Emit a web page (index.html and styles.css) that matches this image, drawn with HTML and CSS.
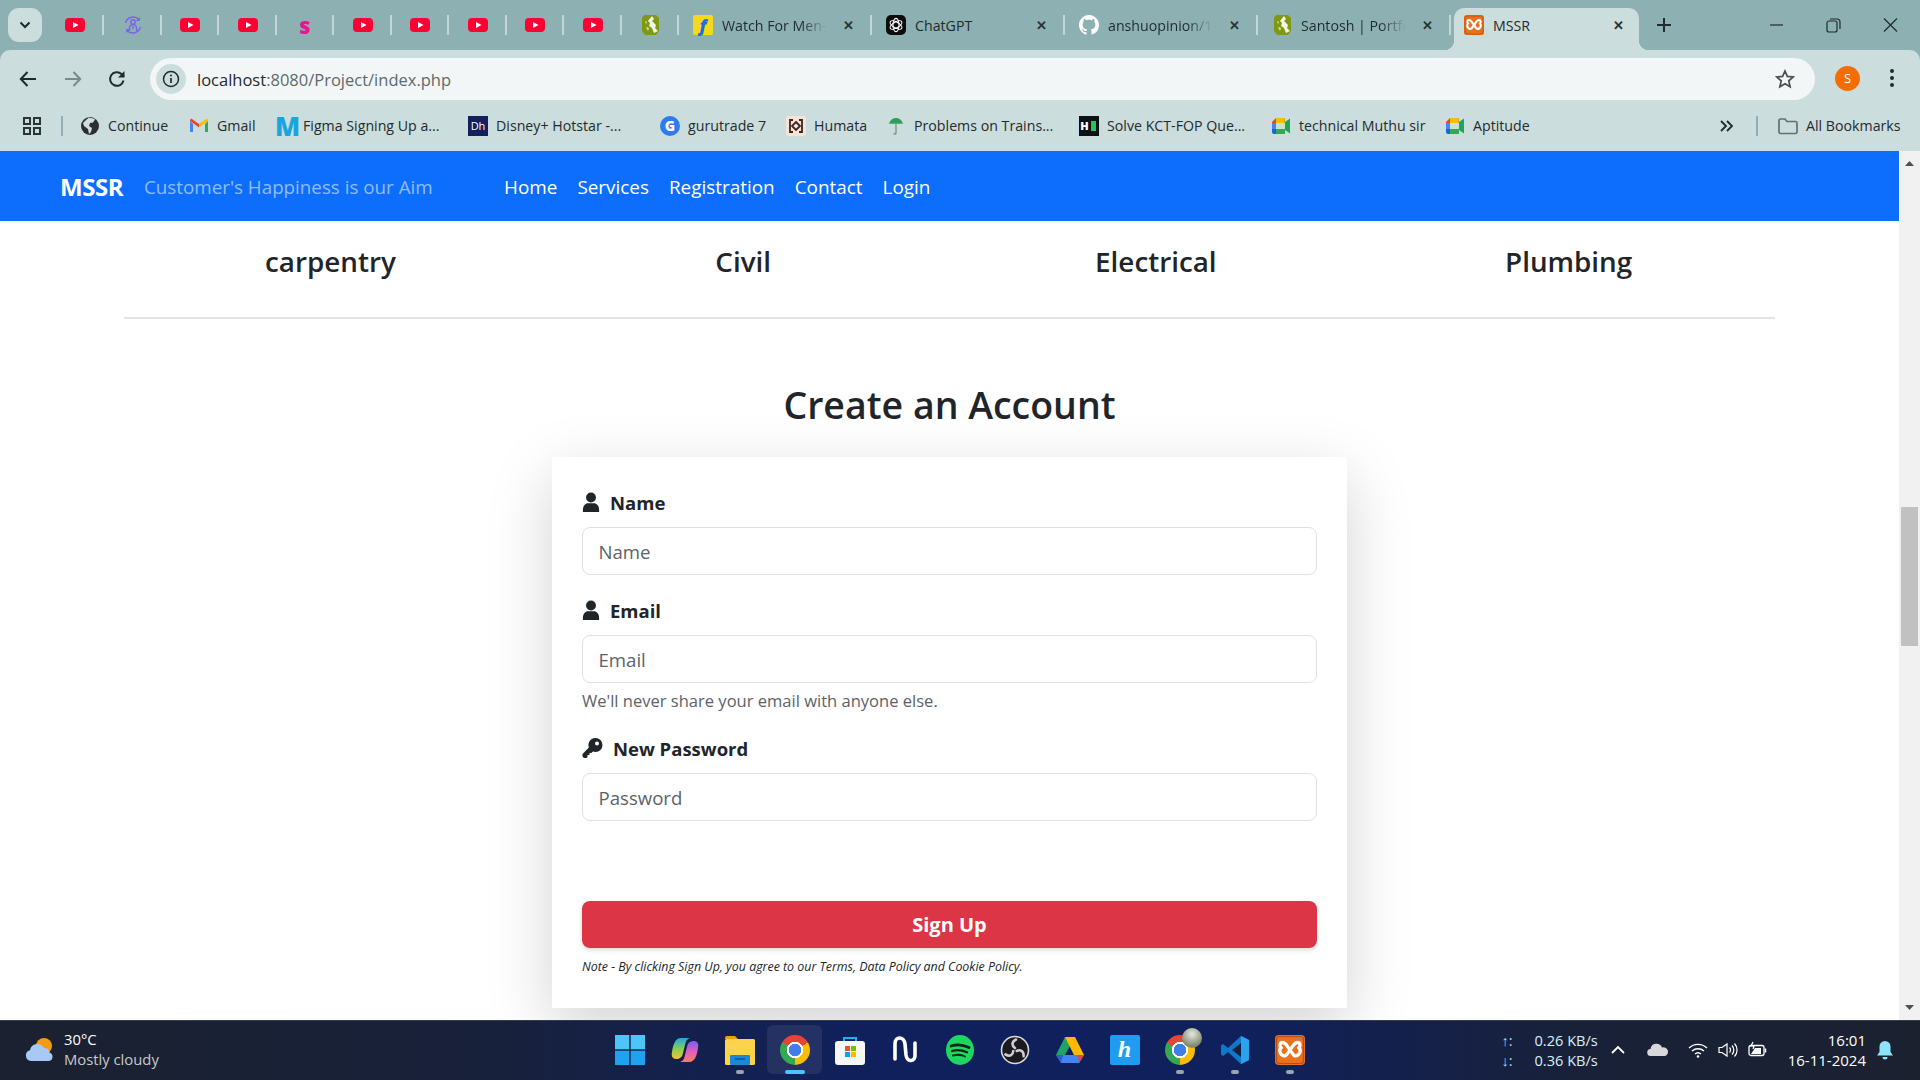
FILE: index.html
```html
<!DOCTYPE html>
<html lang="en">
<head>
    <meta charset="UTF-8">
    <title>MSSR</title>
    <link rel="stylesheet" href="styles.css">
</head>
<body>
    <svg class="sprites" width="0" height="0">
        <symbol id="yt" viewBox="0 0 20 20"><rect y="3" width="20" height="14" rx="4" fill="#ff0033"/><path d="M8 7l5.500 3L8 13z" fill="#fff"/></symbol>
        <symbol id="santosh" viewBox="0 0 20 20"><path d="M4 0h12l3 3v13l-3 4H5l-3-4V3z" fill="#7f9a12"/><path d="M12 1l2 3-2 2 4 4-1 3 3 3-4 2-2-5-3-2 1-3-2-2z" fill="#f3f6e6"/><path d="M5 6l2 1-1 2zM6 12l3 1-1 3z" fill="#dfe8b0"/></symbol>
        <symbol id="helper" viewBox="0 0 20 20"><g fill="none" stroke="#7a62e8" stroke-width="1.400"><path d="M2.500 8A8 8 0 0 1 16 4.500M17.500 12A8 8 0 0 1 4 15.500"/><circle cx="10" cy="7" r="2.200"/><path d="M6.500 16v-3a2.500 2.500 0 0 1 7 0v3M10 11v3"/></g><path d="M16.800 2v4h-4zM3.200 18v-4h4z" fill="#7a62e8"/></symbol>
        <symbol id="gpt" viewBox="0 0 20 20"><rect width="20" height="20" rx="5" fill="#0c0c0c"/><g fill="none" stroke="#fff" stroke-width="1.100"><ellipse cx="10" cy="10" rx="3" ry="6.600"/><ellipse cx="10" cy="10" rx="3" ry="6.600" transform="rotate(60 10 10)"/><ellipse cx="10" cy="10" rx="3" ry="6.600" transform="rotate(120 10 10)"/></g></symbol>
        <symbol id="github" viewBox="0 0 16 16"><path fill="#fff" d="M8 0C3.580 0 0 3.580 0 8c0 3.540 2.290 6.530 5.470 7.590.4.070.55-.17.55-.38 0-.19-.01-.82-.01-1.490-2.010.37-2.530-.49-2.690-.94-.09-.23-.48-.94-.82-1.130-.28-.15-.68-.52-.01-.53.63-.01 1.080.58 1.230.82.72 1.210 1.870.87 2.330.66.07-.52.28-.87.51-1.070-1.780-.2-3.640-.89-3.640-3.950 0-.87.31-1.590.82-2.150-.08-.2-.36-1.020.08-2.120 0 0 .67-.21 2.200.82.64-.18 1.320-.27 2-.27.68 0 1.360.09 2 .27 1.530-1.040 2.200-.82 2.200-.82.44 1.100.16 1.920.08 2.120.51.56.82 1.270.82 2.150 0 3.070-1.870 3.750-3.650 3.950.29.25.54.73.54 1.480 0 1.070-.01 1.930-.01 2.200 0 .21.15.46.55.38A8.013 8.013 0 0 0 16 8c0-4.420-3.580-8-8-8z"/></symbol>
        <symbol id="xampp" viewBox="0 0 20 20"><rect width="20" height="20" rx="2.500" fill="#e8701f"/><rect x="1" y="1" width="18" height="18" rx="2" fill="none" stroke="#b9500f" stroke-width=".8"/><g fill="none" stroke="#fff" stroke-width="2.200"><path d="M10 10c-2-3-3-5-5-5S3 7.500 4 8.500c-1 1-1.500 3.500 1 5s3-1 5-3.500z"/><path d="M10 10c2-3 3-5 5-5s2 2.500 1 3.500c1 1 1.500 3.500-1 5s-3-1-5-3.500z"/></g></symbol>
        <symbol id="gmail" viewBox="0 0 20 20"><path d="M1 5v11h3V8z" fill="#4285f4"/><path d="M19 5v11h-3V8z" fill="#34a853"/><path d="M1 5l9 6.500V8L3 3C2 2.500 1 3.500 1 5z" fill="#ea4335"/><path d="M19 5l-9 6.500V8l7-5c1-.5 2 .5 2 2z" fill="#fbbc04"/></symbol>
        <symbol id="humata" viewBox="0 0 20 20"><rect width="20" height="20" rx="2" fill="#f5e3d6"/><g fill="none" stroke="#3a2520" stroke-width="1.800"><path d="M7 4H4v12h3M13 4h3v12h-3"/><path d="M10 6l4 4-4 4-4-4z"/></g></symbol>
        <symbol id="umbrella" viewBox="0 0 20 20"><path d="M3 8c1-4 4-6 7-6s6 2 7 6c-1.500-.8-2.500-.8-3.500 0-1-.8-2.500-.8-3.500 0-1-.8-2.500-.8-3.500 0C5.500 7.200 4.500 7.200 3 8z" fill="#2f9e5a"/><path d="M10 8v9c0 1.500-2 1.500-2.200 0" fill="none" stroke="#6d8f70" stroke-width="1.200"/></symbol>
        <symbol id="meet" viewBox="0 0 20 20"><path d="M5 2h9v5H5z" fill="#fbbc04"/><path d="M1 6l4-4v5H1z" fill="#ea4335"/><path d="M1 7h4v6H1z" fill="#4285f4"/><path d="M1 13h4v5H3a2 2 0 0 1-2-2z" fill="#1967d2"/><path d="M5 13h9v5H5z" fill="#34a853"/><path d="M14 6l5-3.500v15L14 14z" fill="#1ea362"/><path d="M14 2h-1v5h1z" fill="#e5a800"/></symbol>
        <symbol id="globe" viewBox="0 0 20 20"><circle cx="10" cy="10" r="9" fill="#2b2f33"/><path d="M9 1.500c2 1 5 .5 6 2l-2 3-3 .5-1 3 3 2-1 4-2 2-1-5-4-3-1-3 3-3z" fill="#cfdedd"/></symbol>
        <symbol id="user" viewBox="0 0 20 22"><circle cx="10" cy="6" r="5.500" fill="#212529"/><path d="M1 22v-2c0-5 3-7.500 5.500-7.500h7c2.500 0 5.500 2.500 5.500 7.500v2z" fill="#212529"/></symbol>
        <symbol id="key" viewBox="0 0 20 20"><path d="M13 0a7 7 0 0 1 0 14c-.9 0-1.700-.2-2.500-.5L8.800 15H7v2H5v2l-1 1H1.500L0 18.500V16l6.400-6.400A7 7 0 0 1 13 0zm1.500 3.500a2 2 0 1 0 0 4 2 2 0 0 0 0-4z" fill="#212529"/></symbol>
        <symbol id="cloudy" viewBox="0 0 32 26"><circle cx="20" cy="9" r="8" fill="#f59a16"/><path d="M7 24a5.500 5.500 0 0 1-1-10.800A7.500 7.500 0 0 1 20 11a5 5 0 0 1 5.500 4.500A4.400 4.400 0 0 1 25 24z" fill="#a9c8f5"/></symbol>
        <symbol id="winlogo" viewBox="0 0 30 30"><g fill="#4dc6f7"><rect width="14.300" height="14.300"/><rect x="15.700" width="14.300" height="14.300"/><rect y="15.700" width="14.300" height="14.300" fill="#1fa3ee"/><rect x="15.700" y="15.700" width="14.300" height="14.300" fill="#1fa3ee"/></g></symbol>
        <symbol id="copilot" viewBox="0 0 30 30"><defs><linearGradient id="cpa" x1="0" y1="0" x2="0" y2="1"><stop offset="0" stop-color="#1fa8e8"/><stop offset=".55" stop-color="#8fd04a"/><stop offset="1" stop-color="#f2c23c"/></linearGradient><linearGradient id="cpb" x1="0" y1="0" x2="0" y2="1"><stop offset="0" stop-color="#7a5cf0"/><stop offset=".55" stop-color="#e860b8"/><stop offset="1" stop-color="#f5805a"/></linearGradient></defs><path d="M11 3h10c-3 0-5 2-6 7l-2 8c-.8 4-3 6-7 6-3.500 0-5-3-4-7C3 10 5 3 11 3z" fill="url(#cpa)"/><path d="M19 27H9c3 0 5-2 6-7l2-8c.8-4 3-6 7-6 3.500 0 5 3 4 7-1 7-3 14-9 14z" fill="url(#cpb)"/></symbol>
        <symbol id="folder" viewBox="0 0 30 30"><path d="M0 3a2 2 0 0 1 2-2h8l3 3h-13z" fill="#e5a50a"/><rect y="4" width="30" height="26" rx="1.500" fill="#fcd34a"/><rect x="5" y="20" width="20" height="10" rx="1" fill="#1b87d8"/><rect x="10" y="23" width="10" height="2" fill="#0f5fa8"/></symbol>
        <symbol id="store" viewBox="0 0 30 30"><path d="M9 7V3h12v4" fill="none" stroke="#1db0ee" stroke-width="2"/><rect y="6" width="30" height="24" rx="3" fill="#f7f7f7"/><rect x="10" y="11" width="5" height="5" fill="#f25022"/><rect x="16" y="11" width="5" height="5" fill="#7fba00"/><rect x="10" y="17" width="5" height="5" fill="#00a4ef"/><rect x="16" y="17" width="5" height="5" fill="#ffb900"/></symbol>
        <symbol id="wave" viewBox="0 0 30 30"><path d="M5 24V9c0-8 9-8 10 0l1 11c1 8 10 7 9-1V8" fill="none" stroke="#fff" stroke-width="3.600" stroke-linecap="round"/></symbol>
        <symbol id="spotify" viewBox="0 0 30 30"><ellipse cx="15" cy="15" rx="14" ry="15" fill="#1ed760"/><g fill="none" stroke="#10231a" stroke-linecap="round"><path d="M6 11c6-2 12-1.500 18 1.500" stroke-width="2.800"/><path d="M7 16c5-1.500 10-1 15 1.300" stroke-width="2.300"/><path d="M8 20.500c4-1 9-.8 12 1" stroke-width="2"/></g></symbol>
        <symbol id="obs" viewBox="0 0 30 30"><circle cx="15" cy="15" r="13.500" fill="#1b1b1f" stroke="#d9d9d9" stroke-width="1.600"/><g fill="none" stroke="#cfcfcf" stroke-width="2.600" stroke-linecap="round"><path d="M15 13c-3-2-4-6 1-8.500"/><path d="M15 13c-3-2-4-6 1-8.500" transform="rotate(120 15 15)"/><path d="M15 13c-3-2-4-6 1-8.500" transform="rotate(240 15 15)"/></g></symbol>
        <symbol id="drive" viewBox="0 0 30 30"><path d="M10 2h10L10 20H1z" fill="#1fa463"/><path d="M20 2l9 18H19L10 2z" fill="#ffba00"/><path d="M1 20h28l-5 8H6z" fill="#4285f4"/><path d="M1 20h7l-2 8z" fill="#2a5fd0"/><path d="M23 20h6l-5 8z" fill="#ea4335"/></symbol>
        <symbol id="vscode" viewBox="0 0 30 30"><path d="M21 1l8 4v20l-8 4-13-12-5 4-2-1.500v-9L3 9l5 4z" fill="#0f78c8"/><path d="M21 8l-9 7 9 7z" fill="#10223f"/><path d="M21 1l8 4v20l-8 4z" fill="#29a3ee"/></symbol>
    </svg>

    <div class="tabstrip">
        <button class="tab-search"><svg width="12" height="8" viewBox="0 0 12 8"><path d="M1.500 1.500L6 6l4.500-4.500" fill="none" stroke="#1f2b2c" stroke-width="2"/></svg></button>
        <div class="pinned"><svg class="fav"><use href="#yt"/></svg></div>
        <div class="pinned"><svg class="fav"><use href="#helper"/></svg></div>
        <div class="pinned"><svg class="fav"><use href="#yt"/></svg></div>
        <div class="pinned"><svg class="fav"><use href="#yt"/></svg></div>
        <div class="pinned"><span class="fav-s">s</span></div>
        <div class="pinned"><svg class="fav"><use href="#yt"/></svg></div>
        <div class="pinned"><svg class="fav"><use href="#yt"/></svg></div>
        <div class="pinned"><svg class="fav"><use href="#yt"/></svg></div>
        <div class="pinned"><svg class="fav"><use href="#yt"/></svg></div>
        <div class="pinned"><svg class="fav"><use href="#yt"/></svg></div>
        <div class="pinned"><svg class="fav"><use href="#santosh"/></svg></div>
        <div class="tab"><span class="fav-flip">f</span><span class="tab-title fade">Watch For Men-</span><span class="tab-x">&#x2715;</span></div>
        <div class="tab"><svg class="fav"><use href="#gpt"/></svg><span class="tab-title">ChatGPT</span><span class="tab-x">&#x2715;</span></div>
        <div class="tab"><svg class="fav"><use href="#github"/></svg><span class="tab-title fade">anshuopinion/1</span><span class="tab-x">&#x2715;</span></div>
        <div class="tab"><svg class="fav"><use href="#santosh"/></svg><span class="tab-title fade">Santosh | Portfo</span><span class="tab-x">&#x2715;</span></div>
        <div class="tab active"><svg class="fav"><use href="#xampp"/></svg><span class="tab-title">MSSR</span><span class="tab-x">&#x2715;</span></div>
        <svg class="new-tab" width="20" height="20" viewBox="0 0 20 20"><path d="M10 3v14M3 10h14" stroke="#1f2b2c" stroke-width="2"/></svg>
        <div class="win-controls">
            <svg width="57" height="20" viewBox="0 0 57 20"><path d="M22 10h13" stroke="#1f2b2c" stroke-width="1.200"/></svg>
            <svg width="57" height="20" viewBox="0 0 57 20"><rect x="22" y="6" width="10" height="11" rx="2" fill="none" stroke="#1f2b2c" stroke-width="1.200"/><path d="M25 4h7a3 3 0 0 1 3 3v7" fill="none" stroke="#1f2b2c" stroke-width="1.200"/></svg>
            <svg width="57" height="20" viewBox="0 0 57 20"><path d="M22 3.500l13 13M35 3.500l-13 13" stroke="#1f2b2c" stroke-width="1.200"/></svg>
        </div>
    </div>

    <div class="toolbar">
        <div class="nav-btns">
            <svg width="20" height="20" viewBox="0 0 20 20"><path d="M18 10H3M9.500 3L2.800 10l6.700 7" fill="none" stroke="#1f2b2c" stroke-width="2"/></svg>
            <svg width="20" height="20" viewBox="0 0 20 20"><path d="M2 10h15M10.500 3l6.700 7-6.700 7" fill="none" stroke="#7c8a8b" stroke-width="2"/></svg>
            <svg width="20" height="20" viewBox="0 0 20 20"><path d="M16.500 11.500A6.800 6.800 0 1 1 14.500 5L17 7.500" fill="none" stroke="#1f2b2c" stroke-width="2"/><path d="M17.500 2v6.500H11z" fill="#1f2b2c"/></svg>
        </div>
        <div class="address">
            <span class="info-chip"><svg width="18" height="18" viewBox="0 0 18 18"><circle cx="9" cy="9" r="7.500" fill="none" stroke="#1f2b2c" stroke-width="1.500"/><path d="M9 8v5" stroke="#1f2b2c" stroke-width="1.700"/><circle cx="9" cy="5.500" r="1" fill="#1f2b2c"/></svg></span>
            <span class="url">localhost<span class="url-rest">:8080/Project/index.php</span></span>
            <svg class="star" width="20" height="20" viewBox="0 0 20 20"><path d="M10 2l2.400 5.400 5.800.6-4.400 3.900 1.300 5.800L10 14.700l-5.100 3 1.300-5.800L1.800 8l5.800-.6z" fill="none" stroke="#474f50" stroke-width="1.700"/></svg>
        </div>
        <span class="avatar">S</span>
        <svg class="menu-dots" width="6" height="20" viewBox="0 0 6 20"><circle cx="3" cy="3" r="2" fill="#1f2b2c"/><circle cx="3" cy="10" r="2" fill="#1f2b2c"/><circle cx="3" cy="17" r="2" fill="#1f2b2c"/></svg>
    </div>

    <div class="bookmarks">
        <svg width="20" height="20" viewBox="0 0 20 20"><g fill="none" stroke="#2c3536" stroke-width="2"><rect x="2" y="2" width="6" height="6"/><rect x="12" y="2" width="6" height="6"/><rect x="2" y="12" width="6" height="6"/><rect x="12" y="12" width="6" height="6"/></g></svg>
        <span class="bm-sep"></span>
        <div class="bm"><svg class="fav"><use href="#globe"/></svg>Continue</div>
        <div class="bm"><svg class="fav"><use href="#gmail"/></svg>Gmail</div>
        <div class="bm"><span class="fav-m">M</span>Figma Signing Up a...</div>
        <div class="bm"><span class="fav-box disney">Dh</span>Disney+ Hotstar -...</div>
        <div class="bm"><span class="fav-g">G</span>gurutrade 7</div>
        <div class="bm"><svg class="fav"><use href="#humata"/></svg>Humata</div>
        <div class="bm"><svg class="fav"><use href="#umbrella"/></svg>Problems on Trains...</div>
        <div class="bm"><span class="fav-box fav-hr">H</span>Solve KCT-FOP Que...</div>
        <div class="bm"><svg class="fav"><use href="#meet"/></svg>technical Muthu sir</div>
        <div class="bm"><svg class="fav"><use href="#meet"/></svg>Aptitude</div>
        <svg width="20" height="16" viewBox="0 0 20 16"><path d="M4 3l5 5-5 5M10 3l5 5-5 5" fill="none" stroke="#1f2b2c" stroke-width="1.800"/></svg>
        <span class="bm-sep"></span>
        <div class="bm"><svg class="fav" viewBox="0 0 20 20"><path d="M1 4.500A1.500 1.500 0 0 1 2.500 3H7l2 2.500h8.500A1.500 1.500 0 0 1 19 7v9a1.500 1.500 0 0 1-1.500 1.500h-15A1.500 1.500 0 0 1 1 16z" fill="none" stroke="#666f70" stroke-width="1.700"/></svg>All Bookmarks</div>
    </div>

    <div class="viewport">
        <div class="page">
            <nav class="navbar">
                <a class="brand">MSSR</a>
                <span class="tagline">Customer's Happiness is our Aim</span>
                <ul class="nav-links">
                    <li>Home</li>
                    <li>Services</li>
                    <li>Registration</li>
                    <li>Contact</li>
                    <li>Login</li>
                </ul>
            </nav>

            <div class="services">
                <h4>carpentry</h4>
                <h4>Civil</h4>
                <h4>Electrical</h4>
                <h4>Plumbing</h4>
            </div>

            <h2 class="form-title">Create an Account</h2>

            <form class="signup-card">
                <label class="field-label"><svg class="label-ico"><use href="#user"/></svg>Name</label>
                <input class="field" type="text" placeholder="Name">
                <label class="field-label next"><svg class="label-ico"><use href="#user"/></svg>Email</label>
                <input class="field" type="email" placeholder="Email">
                <div class="help">We'll never share your email with anyone else.</div>
                <label class="field-label after-help"><svg class="label-ico wide"><use href="#key"/></svg>New Password</label>
                <input class="field" type="password" placeholder="Password">
                <button class="signup-btn" type="button">Sign Up</button>
                <p class="note">Note - By clicking Sign Up, you agree to our Terms, Data Policy and Cookie Policy.</p>
            </form>
        </div>
        <div class="scrollbar">
            <svg width="21" height="10" viewBox="0 0 21 10"><path d="M6 8l4.500-5L15 8z" fill="#505050"/></svg>
            <div class="thumb"></div>
            <svg class="arrow-down" width="21" height="10" viewBox="0 0 21 10"><path d="M6 2l4.500 5L15 2z" fill="#505050"/></svg>
        </div>
    </div>

    <footer class="taskbar">
        <div class="weather">
            <svg width="32" height="26"><use href="#cloudy"/></svg>
            <div>
                <div class="temp">30°C</div>
                <div class="sky">Mostly cloudy</div>
            </div>
        </div>
        <div class="dock">
            <div class="dock-item"><svg class="dock-ico"><use href="#winlogo"/></svg></div>
            <div class="dock-item"><svg class="dock-ico"><use href="#copilot"/></svg></div>
            <div class="dock-item open"><svg class="dock-ico"><use href="#folder"/></svg></div>
            <div class="dock-item current"><span class="chrome"></span></div>
            <div class="dock-item"><svg class="dock-ico"><use href="#store"/></svg></div>
            <div class="dock-item"><svg class="dock-ico"><use href="#wave"/></svg></div>
            <div class="dock-item"><svg class="dock-ico"><use href="#spotify"/></svg></div>
            <div class="dock-item"><svg class="dock-ico"><use href="#obs"/></svg></div>
            <div class="dock-item"><svg class="dock-ico"><use href="#drive"/></svg></div>
            <div class="dock-item"><span class="h-app">h</span></div>
            <div class="dock-item open"><span class="chrome"></span><span class="chrome-badge"></span></div>
            <div class="dock-item open"><svg class="dock-ico"><use href="#vscode"/></svg></div>
            <div class="dock-item open"><svg class="dock-ico"><use href="#xampp"/></svg></div>
        </div>
        <div class="tray">
            <div class="netspeed">
                <span class="net-arrow">↑:</span><span>0.26 KB/s</span>
                <span class="net-arrow">↓:</span><span>0.36 KB/s</span>
            </div>
            <svg class="tray-caret" width="16" height="10" viewBox="0 0 16 10"><path d="M2 8l6-6 6 6" fill="none" stroke="#fff" stroke-width="1.800"/></svg>
            <svg class="tray-cloud" width="22" height="14" viewBox="0 0 22 14"><path d="M4 13a3.500 3.500 0 0 1-.5-7A6 6 0 0 1 15 4.500 4.300 4.300 0 0 1 18 13z" fill="#d8d8d8"/></svg>
            <svg class="tray-wifi" width="20" height="16" viewBox="0 0 20 16"><g fill="none" stroke="#fff" stroke-width="1.400"><path d="M1 6a13 13 0 0 1 18 0"/><path d="M4 9a9 9 0 0 1 12 0"/><path d="M7 12a4.500 4.500 0 0 1 6 0"/></g><circle cx="10" cy="14.500" r="1.300" fill="#fff"/></svg>
            <svg class="tray-vol" width="20" height="18" viewBox="0 0 20 18"><g fill="none" stroke="#fff" stroke-width="1.200"><path d="M1 6.500h3L9 3v12l-5-3.500H1z"/><path d="M11.500 6.500a3.500 3.500 0 0 1 0 5M14 4.500a6.500 6.500 0 0 1 0 9M16.500 2.500a9.500 9.500 0 0 1 0 13"/></g></svg>
            <svg class="tray-batt" width="20" height="18" viewBox="0 0 20 18"><rect x="1" y="4.500" width="15" height="10" rx="2" fill="none" stroke="#fff" stroke-width="1.300"/><path d="M17.500 7.500v4" stroke="#fff" stroke-width="1.500"/><path d="M3 13l4-6h6v6z" fill="#fff"/><path d="M5 1l-2 4h3l-1 3" fill="none" stroke="#fff" stroke-width="1.200"/></svg>
            <div class="clock">
                <div>16:01</div>
                <div>16-11-2024</div>
            </div>
            <svg class="bell" width="20" height="20" viewBox="0 0 20 20"><path d="M10 1a5.500 5.500 0 0 1 5.500 5.500V12l2.500 3.500H2L4.500 12V6.500A5.500 5.500 0 0 1 10 1z" fill="#8de4fb"/><path d="M7.500 17a2.500 2.500 0 0 0 5 0z" fill="#8de4fb"/></svg>
        </div>
    </footer>
</body>
</html>
```

FILE: styles.css
```css
* {
    box-sizing: border-box;
}
html, body {
    margin: 0;
    height: 100%;
    overflow: hidden;
}
body {
    width: 1920px;
    height: 1080px;
    display: flex;
    flex-direction: column;
    font-family: "Open Sans", "Noto Sans", sans-serif;
    background: #8db1b2;
    color: #212529;
}
.sprites {
    position: absolute;
}
.fav {
    width: 20px;
    height: 20px;
    flex: none;
}

/* browser tabs */
.tabstrip {
    height: 50px;
    flex: none;
    display: flex;
    align-items: flex-start;
    padding-left: 8px;
    background: #8db1b2;
}
.tab-search {
    width: 34px;
    height: 34px;
    margin: 8px 4.5px 0 0;
    border: 0;
    border-radius: 11px;
    background: #ccdddd;
    display: flex;
    align-items: center;
    justify-content: center;
    padding: 0;
}
.pinned {
    width: 57.5px;
    height: 34px;
    margin-top: 8px;
    position: relative;
    display: flex;
    align-items: center;
    padding-left: 18.5px;
}
.pinned::after, .tab::after {
    content: "";
    position: absolute;
    right: 0;
    top: 7px;
    width: 2px;
    height: 20px;
    background: #c3d5d5;
}
.fav-s {
    width: 20px;
    text-align: center;
    font-weight: 800;
    font-size: 22px;
    line-height: 24px;
    color: #e6178f;
}
.fav-flip {
    width: 20px;
    height: 20px;
    flex: none;
    border-radius: 2px;
    background: #f8d81c;
    color: #1a6fe0;
    font-size: 17px;
    font-weight: 800;
    font-style: italic;
    line-height: 21px;
    text-align: center;
}
.tab {
    width: 193px;
    height: 34px;
    margin-top: 8px;
    position: relative;
    display: flex;
    align-items: center;
    padding-left: 14px;
    font-size: 14.2px;
    color: #1f2b2c;
}
.tab-title {
    width: 105px;
    margin-left: 9px;
    white-space: nowrap;
    overflow: hidden;
}
.tab-title.fade {
    -webkit-mask-image: linear-gradient(90deg, #000 75%, transparent 100%);
    mask-image: linear-gradient(90deg, #000 75%, transparent 100%);
}
.tab-x {
    margin-left: 13px;
    width: 16px;
    text-align: center;
    font-size: 13px;
    font-weight: 700;
    color: #2a3334;
}
.tab.active {
    width: 185px;
    height: 42px;
    margin-left: 3px;
    border-radius: 10px 10px 0 0;
    background: #ccdddd;
    padding: 0 0 8px 10px;
}
.tab.active::after {
    display: none;
}
/* the curved feet of the open tab */
.tab.active::before {
    content: "";
    position: absolute;
    left: -10px;
    right: -10px;
    bottom: 0;
    height: 10px;
    background:
        radial-gradient(circle at 0 0, #8db1b2 10px, #ccdddd 10.5px) left / 10px 10px no-repeat,
        radial-gradient(circle at 100% 0, #8db1b2 10px, #ccdddd 10.5px) right / 10px 10px no-repeat;
}
.tab.active .tab-x {
    margin-left: 12px;
}
.new-tab {
    margin: 15px 0 0 14.5px;
}
.win-controls {
    margin-left: auto;
    margin-right: 1.5px;
    padding-top: 15px;
    display: flex;
}

/* address bar */
.toolbar {
    height: 50px;
    flex: none;
    display: flex;
    align-items: flex-start;
    padding: 8px 0 0 18px;
    background: #ccdddd;
    border-radius: 10px 10px 0 0;
}
.nav-btns {
    display: flex;
    gap: 24.5px;
    padding-top: 11px;
}
.address {
    width: 1665px;
    height: 42px;
    margin-left: 23px;
    border-radius: 21px;
    background: #f2f6f7;
    display: flex;
    align-items: center;
    padding: 0 20px 0 6px;
}
.info-chip {
    width: 30px;
    height: 30px;
    border-radius: 50%;
    background: #ccdddd;
    display: flex;
    align-items: center;
    justify-content: center;
}
.url {
    margin-left: 11px;
    font-size: 16.5px;
    color: #1f2b2c;
}
.url-rest {
    color: #5d6a6b;
}
.star {
    margin-left: auto;
}
.avatar {
    width: 25px;
    height: 25px;
    margin: 8px 0 0 20px;
    border-radius: 50%;
    background: #f46d00;
    color: #fff;
    font-size: 13px;
    text-align: center;
    line-height: 25px;
}
.menu-dots {
    margin: 10px 0 0 29px;
}

/* bookmarks */
.bookmarks {
    height: 51px;
    flex: none;
    display: grid;
    grid-template-columns: 39px 19px 109px 86px 193px 192px 126px 100px 193px 192px 174px 272px 39px 22px 1fr;
    align-items: center;
    padding-left: 22px;
    background: #ccdddd;
    font-size: 14.2px;
    color: #1f2b2c;
}
.bm {
    display: flex;
    align-items: center;
    gap: 8px;
    white-space: nowrap;
}
.bm-sep {
    width: 2px;
    height: 20px;
    background: #8db1b2;
}
.fav-m {
    width: 20px;
    font-size: 26px;
    font-weight: 800;
    line-height: 24px;
    text-align: center;
    color: #1aa5e0;
}
.fav-box {
    width: 20px;
    height: 20px;
    font-size: 11px;
    line-height: 20px;
    text-align: center;
}
.disney {
    background: #14205e;
    color: #fff;
}
.fav-hr {
    position: relative;
    padding-right: 9px;
    background: #0d1017;
    color: #fff;
    font-size: 11px;
    font-weight: 800;
}
.fav-hr::after {
    content: "";
    position: absolute;
    left: 11.5px;
    top: 5px;
    width: 5px;
    height: 10px;
    background: #1ec95b;
}
.fav-g {
    width: 20px;
    height: 20px;
    border-radius: 50%;
    background: #2c7bf0;
    color: #fff;
    font-size: 14px;
    font-weight: 800;
    line-height: 20px;
    text-align: center;
}

/* page */
.viewport {
    flex: 1;
    display: flex;
    min-height: 0;
    background: #fff;
}
.page {
    flex: 1;
    overflow: hidden;
    background: #fff;
}
.navbar {
    height: 70px;
    display: flex;
    align-items: center;
    padding: 1px 0 0 60px;
    background: #0d6efd;
    color: #fff;
}
.brand {
    width: 84px;
    font-size: 24px;
    font-weight: 700;
    letter-spacing: -.4px;
}
.tagline {
    width: 360px;
    font-size: 18.8px;
    color: rgba(255, 255, 255, .55);
}
.nav-links {
    list-style: none;
    display: flex;
    gap: 20px;
    margin: 0;
    padding: 0;
    font-size: 18.9px;
}
.services {
    margin: 0 124px;
    padding: 19px 0 35px;
    display: grid;
    grid-template-columns: repeat(4, 1fr);
    border-bottom: 2px solid #e3e3e8;
    text-align: center;
}
.services h4 {
    margin: 0;
    font-size: 27.8px;
    line-height: 42px;
    font-weight: 600;
}
.form-title {
    margin: 56px 0 22px;
    font-size: 37.5px;
    line-height: 60px;
    font-weight: 600;
    text-align: center;
}
.signup-card {
    width: 795px;
    height: 551px;
    margin: 0 auto;
    padding: 31px 30px 0;
    background: #fff;
    box-shadow: 0 20px 60px rgba(0, 0, 0, .175);
}
.field-label {
    height: 30px;
    display: flex;
    align-items: center;
    gap: 10px;
    margin-bottom: 9px;
    padding-bottom: 2px;
    font-size: 18.5px;
    font-weight: 700;
}
.field-label.next {
    margin-top: 21px;
}
.field-label.after-help {
    margin-top: 20px;
}
.label-ico {
    width: 18px;
    height: 20px;
}
.label-ico.wide {
    width: 21px;
}
.field {
    display: block;
    width: 100%;
    height: 48px;
    padding: 0 15.5px;
    border: 1.5px solid #dee2e6;
    border-radius: 8px;
    background: #fff;
    font-family: inherit;
    font-size: 18.6px;
    color: #212529;
}
.field::placeholder {
    color: #5c6369;
    opacity: 1;
}
.help {
    margin-top: 5px;
    height: 26px;
    line-height: 26px;
    font-size: 16.55px;
    color: #5c6369;
}
.signup-btn {
    display: block;
    width: 100%;
    height: 47px;
    margin-top: 80px;
    border: 0;
    border-radius: 8px;
    background: #dc3545;
    color: #fff;
    font-family: inherit;
    font-size: 20px;
    font-weight: 700;
    box-shadow: 0 2px 5px rgba(0, 0, 0, .15);
}
.note {
    margin: 9px 0 0;
    line-height: 20px;
    font-size: 12.4px;
    font-style: italic;
}
.scrollbar {
    width: 21px;
    flex: none;
    display: flex;
    flex-direction: column;
    background: #f1f1f1;
    padding-top: 7px;
}
.thumb {
    width: 17px;
    height: 139px;
    margin: 339px 0 0 2px;
    background: #c1c1c1;
}
.arrow-down {
    margin-top: auto;
    margin-bottom: 7px;
}

/* windows taskbar */
.taskbar {
    height: 60px;
    flex: none;
    display: grid;
    grid-template-columns: 602px 715px 1fr;
    align-items: center;
    padding-bottom: 2px;
    border-top: 1px solid #363b4a;
    background: linear-gradient(90deg, #1b2130 0, #18213a 25%, #10205c 45%, #10205c 65%, #182138 82%, #1c2130 100%);
    color: #fff;
}
.weather {
    display: flex;
    align-items: center;
    gap: 8px;
    padding-left: 24px;
    font-size: 14.8px;
    line-height: 20px;
}
.weather > div {
    margin-top: -2px;
}
.sky {
    color: #c8c9cc;
}
.dock {
    display: flex;
}
.dock-item {
    width: 55px;
    height: 49px;
    position: relative;
    display: flex;
    align-items: center;
    justify-content: center;
    border-radius: 6px;
}
.dock-ico {
    width: 30px;
    height: 30px;
}
.dock-item.current {
    background: rgba(255, 255, 255, .08);
}
.dock-item.open::after, .dock-item.current::after {
    content: "";
    position: absolute;
    bottom: 0;
    left: 50%;
    width: 8px;
    height: 4px;
    margin-left: -4px;
    border-radius: 2px;
    background: #9aa3b2;
}
.dock-item.current::after {
    width: 20px;
    margin-left: -10px;
    background: #4cc2ff;
}
.chrome {
    width: 30px;
    height: 30px;
    border-radius: 50%;
    background:
        radial-gradient(circle, #3f7ee8 0 6px, #fff 6.5px 8px, transparent 8.5px),
        conic-gradient(from -60deg, #ea4335 0 120deg, #fbbc04 0 240deg, #34a853 0);
}
.chrome-badge {
    position: absolute;
    top: 3px;
    right: 5px;
    width: 20px;
    height: 20px;
    border-radius: 50%;
    background: radial-gradient(circle at 50% 30%, #e8e8e0, #7f8a70 70%);
}
.h-app {
    width: 30px;
    height: 30px;
    border-radius: 2px;
    background: #1f9bf0;
    color: #fff;
    font: italic 700 24px/28px "Liberation Serif", serif;
    text-align: center;
}
.tray {
    display: flex;
    align-items: center;
    padding: 0 25px 0 184.5px;
    font-size: 14.6px;
}
.netspeed {
    display: grid;
    grid-template-columns: 33px auto;
    line-height: 20px;
    color: #d9eefc;
}
.net-arrow {
    color: #a8d8f0;
}
.tray-caret {
    margin-left: 12px;
}
.tray-cloud {
    margin-left: 21px;
}
.tray-wifi {
    margin-left: 19px;
}
.tray-vol, .tray-batt {
    margin-left: 10px;
}
.clock {
    flex: 1;
    font-size: 15px;
    text-align: right;
    line-height: 20px;
}
.bell {
    margin-left: 9px;
}
```
